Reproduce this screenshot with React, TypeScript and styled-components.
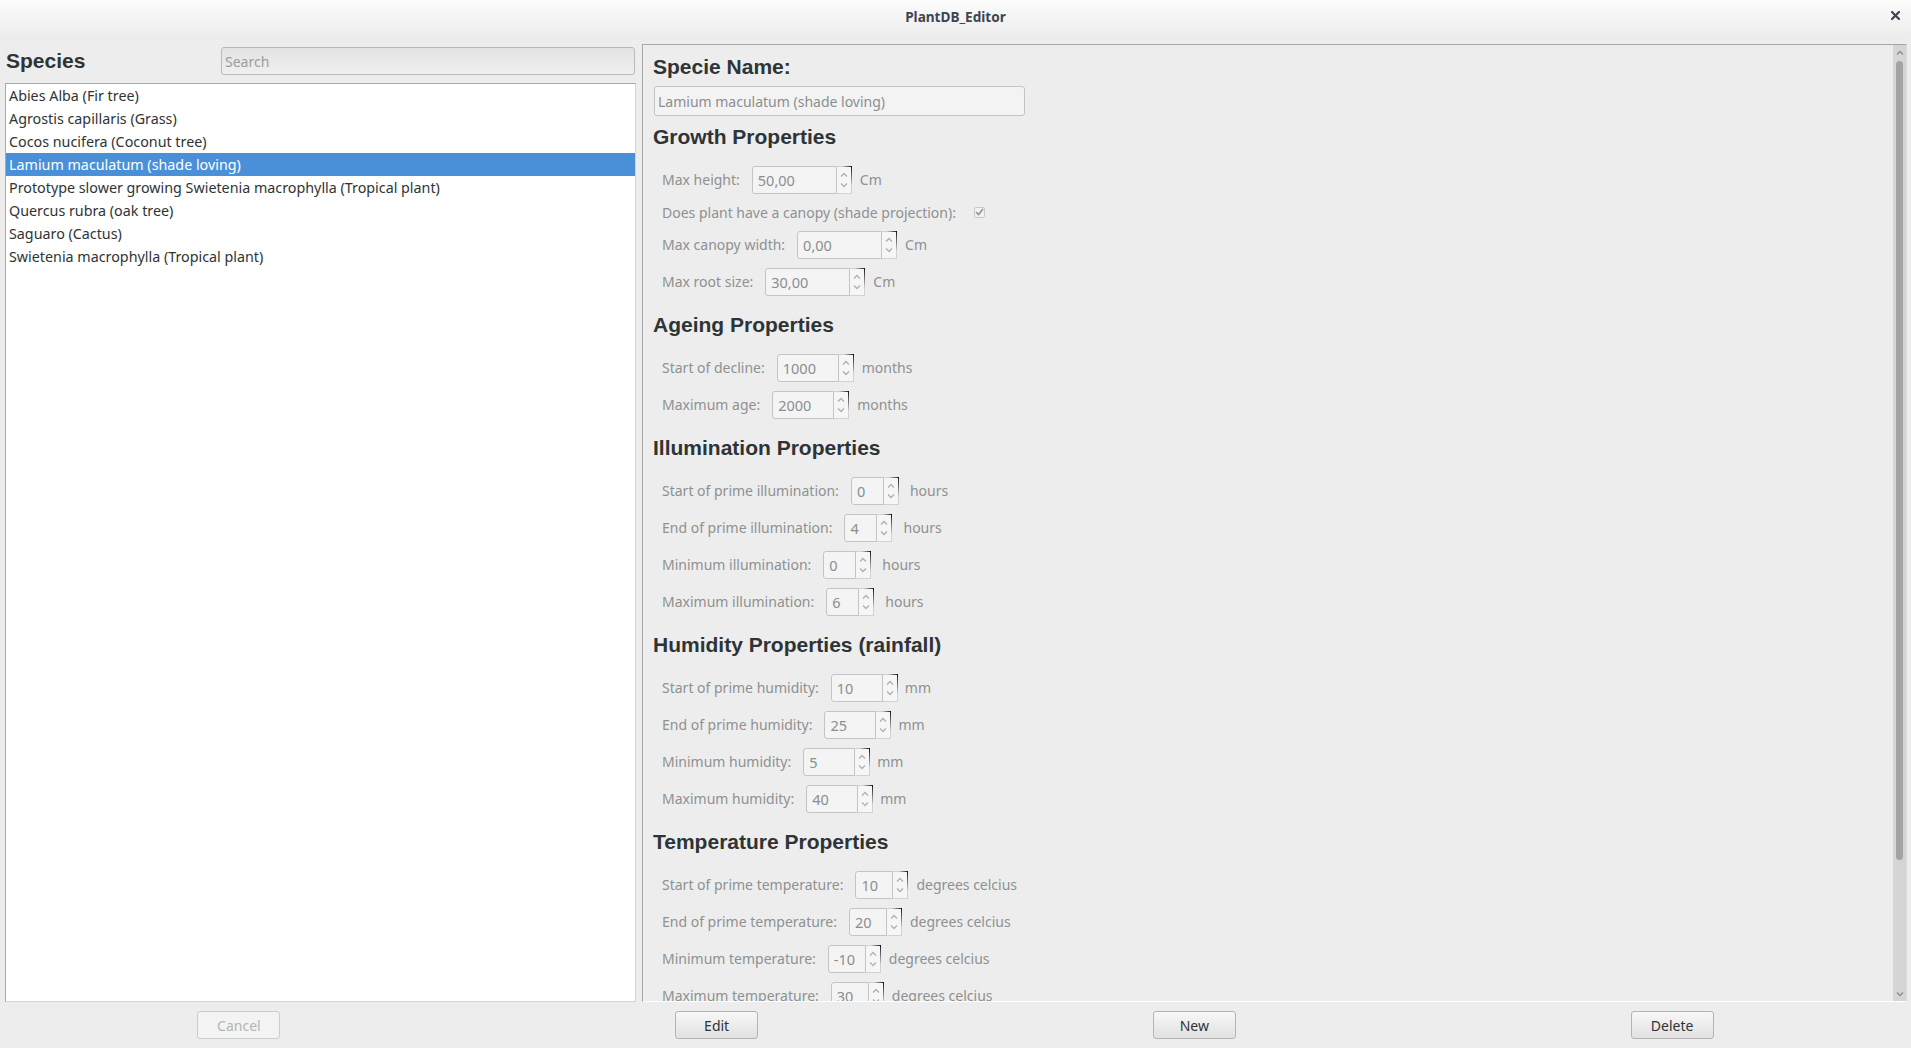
import React from 'react';
import styled, { createGlobalStyle } from 'styled-components';

const GlobalStyle = createGlobalStyle`
  html, body { margin: 0; padding: 0; background: #ededed; }
  body { font-family: "Noto Sans", "DejaVu Sans", sans-serif; }
  * { box-sizing: border-box; }
`;

const Window = styled.div`
  width: 1911px;
  height: 1048px;
  display: flex;
  flex-direction: column;
  background: #ededed;
  overflow: hidden;
`;

const TitleBar = styled.header`
  position: relative;
  flex: none;
  height: 36px;
  padding-bottom: 4px;
  display: flex;
  align-items: center;
  justify-content: center;
  background: linear-gradient(#fcfcfc, #ededed);
`;

const Title = styled.span`
  font: bold 13.6px "Noto Sans", sans-serif;
  color: #3c4650;
`;

const CloseButton = styled.button`
  position: absolute;
  right: 10px;
  top: 9px;
  width: 12px;
  height: 12px;
  padding: 0;
  border: none;
  background: transparent;
  display: flex;
  align-items: center;
  justify-content: center;
`;

const Main = styled.div`
  flex: 1;
  min-height: 0;
  display: flex;
`;

const LeftPane = styled.section`
  flex: none;
  width: 642px;
  display: flex;
  flex-direction: column;
  gap: 7px;
  padding: 10px 6px 1px 5px;
`;

const HeaderRow = styled.div`
  height: 30px;
  display: flex;
  align-items: center;
  justify-content: space-between;
`;

const SpeciesTitle = styled.h1`
  margin: 0 0 0 1px;
  font: bold 21px "Liberation Sans", Arial, sans-serif;
  color: #2e3436;
`;

const SearchInput = styled.input`
  width: 414px;
  height: 28px;
  margin-right: 1px;
  padding: 0 3px;
  border: 1px solid #b9b9b9;
  border-radius: 3px;
  background: linear-gradient(#e3e3e3, #efefef);
  font: 14px "Noto Sans", sans-serif;
  color: #2e3436;
  outline: none;
  &::placeholder { color: #9b9d9e; }
`;

const SpeciesList = styled.ul`
  flex: 1;
  margin: 0;
  padding: 0;
  list-style: none;
  background: #fff;
  border: 1px solid #a9a9a9;
  border-right-color: #d4d4d4;
  border-bottom-color: #d4d4d4;
`;

const SpeciesItem = styled.li<{ $selected?: boolean }>`
  height: 23px;
  padding-left: 3px;
  display: flex;
  align-items: center;
  font-size: 14.3px;
  color: ${(p) => (p.$selected ? '#ffffff' : '#2e3436')};
  background: ${(p) => (p.$selected ? '#4a90d9' : 'transparent')};
`;

const RightPane = styled.section`
  flex: 1;
  min-width: 0;
  display: flex;
  margin: 8px 4px 1px 0;
  border: 1px solid #a6a6a6;
  border-right-color: #dadada;
  border-bottom-color: #ffffff;
`;

const FormArea = styled.div`
  flex: 1;
  min-width: 0;
  overflow: hidden;
  padding: 4px 0 0 10px;
`;

const SectionTitle = styled.h2<{ $variant?: 'name' | 'tight' | 'normal' }>`
  margin: 0;
  display: flex;
  align-items: center;
  font: bold 21px "Liberation Sans", Arial, sans-serif;
  color: #2e3436;
  height: ${(p) => (p.$variant === 'name' ? '36px' : p.$variant === 'tight' ? '45px' : '49px')};
  padding-bottom: ${(p) => (p.$variant === 'tight' ? '4px' : '0')};
`;

const NameInput = styled.div`
  width: 371px;
  height: 30px;
  margin: 1px 0 0 1px;
  padding-left: 3px;
  display: flex;
  align-items: center;
  border: 1px solid #c3c3c3;
  border-radius: 3px;
  background: #f3f3f3;
  font-size: 14px;
  color: #8b8e8f;
`;

const FieldRow = styled.div<{ $short?: boolean }>`
  height: ${(p) => (p.$short ? '28px' : '37px')};
  padding-left: 9px;
  display: flex;
  align-items: center;
`;

const FieldLabel = styled.span`
  font-size: 14px;
  color: #8e9192;
  white-space: nowrap;
`;

const Spinner = styled.div`
  display: flex;
  height: 28px;
  margin-left: 12px;
`;

const SpinText = styled.div<{ $w: number }>`
  width: ${(p) => p.$w}px;
  height: 28px;
  padding-left: 5px;
  display: flex;
  align-items: center;
  border: 1px solid #c4c4c4;
  border-radius: 3px 0 0 3px;
  background: #f4f4f4;
  font-size: 14.5px;
  color: #8b8e8f;
`;

const SpinButtons = styled.div`
  position: relative;
  width: 15px;
  height: 28px;
  display: flex;
  flex-direction: column;
  align-items: center;
  justify-content: space-around;
  padding: 2px 0;
  border: 1px solid #d2d2d2;
  border-left: none;
  background: #f6f6f6;
  &::before {
    content: '';
    position: absolute;
    top: -1px;
    right: -1px;
    width: 70%;
    height: 1px;
    background: linear-gradient(to left, #111, rgba(0, 0, 0, 0));
  }
  &::after {
    content: '';
    position: absolute;
    top: -1px;
    right: -1px;
    width: 1px;
    height: 80%;
    background: linear-gradient(#111, rgba(0, 0, 0, 0));
  }
`;

const Unit = styled.span<{ $gap: number }>`
  margin-left: ${(p) => p.$gap}px;
  font-size: 14px;
  color: #8e9192;
  white-space: nowrap;
`;

const CheckBox = styled.div`
  width: 11px;
  height: 11px;
  margin-left: 18px;
  border: 1px solid #c9c9c9;
  border-radius: 2px;
  background: #f2f2f2;
  display: flex;
  align-items: center;
  justify-content: center;
`;

const ScrollTrack = styled.div`
  flex: none;
  width: 13px;
  display: flex;
  flex-direction: column;
  align-items: center;
  background: #d5d5d5;
`;

const ScrollArrow = styled.div`
  height: 14px;
  display: flex;
  align-items: center;
  justify-content: center;
`;

const ScrollThumb = styled.div`
  width: 7px;
  height: 799px;
  margin-top: 2px;
  border-radius: 4px;
  background: #a3a3a3;
`;

const ScrollSpacer = styled.div`
  flex: 1;
`;

const BottomBar = styled.footer`
  flex: none;
  height: 45px;
  padding-top: 8px;
  display: grid;
  grid-template-columns: repeat(4, 1fr);
  justify-items: center;
  align-items: start;
`;

const ActionButton = styled.button`
  width: 83px;
  height: 28px;
  border: 1px solid #b4b4b4;
  border-radius: 3px;
  background: linear-gradient(#f7f7f7, #e1e1e1);
  font: 14px "Noto Sans", sans-serif;
  color: #2e3436;
  padding: 0;
  &:disabled {
    color: #b4b6b3;
    background: #f3f3f3;
    border-color: #cdcdcd;
  }
`;

const Chevron = ({ up, color = '#b0b0b0' }: { up?: boolean; color?: string }) => (
  <svg width="8" height="5" viewBox="0 0 8 5">
    <polyline
      points={up ? '1,4.5 4,1.5 7,4.5' : '1,0.5 4,3.5 7,0.5'}
      fill="none"
      stroke={color}
      strokeWidth="1.3"
    />
  </svg>
);

type Row =
  | { kind: 'spin'; label: string; value: string; w: number; unit: string; unitGap?: number }
  | { kind: 'check'; label: string };

type Section = { title: string; tight?: boolean; rows: Row[] };

const species = [
  'Abies Alba (Fir tree)',
  'Agrostis capillaris (Grass)',
  'Cocos nucifera (Coconut tree)',
  'Lamium maculatum (shade loving)',
  'Prototype slower growing Swietenia macrophylla (Tropical plant)',
  'Quercus rubra (oak tree)',
  'Saguaro (Cactus)',
  'Swietenia macrophylla (Tropical plant)',
];

const sections: Section[] = [
  {
    title: 'Growth Properties',
    tight: true,
    rows: [
      { kind: 'spin', label: 'Max height:', value: '50,00', w: 85, unit: 'Cm' },
      { kind: 'check', label: 'Does plant have a canopy (shade projection):' },
      { kind: 'spin', label: 'Max canopy width:', value: '0,00', w: 85, unit: 'Cm' },
      { kind: 'spin', label: 'Max root size:', value: '30,00', w: 85, unit: 'Cm' },
    ],
  },
  {
    title: 'Ageing Properties',
    rows: [
      { kind: 'spin', label: 'Start of decline:', value: '1000', w: 62, unit: 'months' },
      { kind: 'spin', label: 'Maximum age:', value: '2000', w: 62, unit: 'months' },
    ],
  },
  {
    title: 'Illumination Properties',
    rows: [
      { kind: 'spin', label: 'Start of prime illumination:', value: '0', w: 33, unit: 'hours', unitGap: 11 },
      { kind: 'spin', label: 'End of prime illumination:', value: '4', w: 33, unit: 'hours', unitGap: 11 },
      { kind: 'spin', label: 'Minimum illumination:', value: '0', w: 33, unit: 'hours', unitGap: 11 },
      { kind: 'spin', label: 'Maximum illumination:', value: '6', w: 33, unit: 'hours', unitGap: 11 },
    ],
  },
  {
    title: 'Humidity Properties (rainfall)',
    rows: [
      { kind: 'spin', label: 'Start of prime humidity:', value: '10', w: 52, unit: 'mm', unitGap: 7 },
      { kind: 'spin', label: 'End of prime humidity:', value: '25', w: 52, unit: 'mm', unitGap: 7 },
      { kind: 'spin', label: 'Minimum humidity:', value: '5', w: 52, unit: 'mm', unitGap: 7 },
      { kind: 'spin', label: 'Maximum humidity:', value: '40', w: 52, unit: 'mm', unitGap: 7 },
    ],
  },
  {
    title: 'Temperature Properties',
    rows: [
      { kind: 'spin', label: 'Start of prime temperature:', value: '10', w: 38, unit: 'degrees celcius' },
      { kind: 'spin', label: 'End of prime temperature:', value: '20', w: 38, unit: 'degrees celcius' },
      { kind: 'spin', label: 'Minimum temperature:', value: '-10', w: 38, unit: 'degrees celcius' },
      { kind: 'spin', label: 'Maximum temperature:', value: '30', w: 38, unit: 'degrees celcius' },
    ],
  },
];

const FieldLine = ({ row }: { row: Row }) => {
  if (row.kind === 'check') {
    return (
      <FieldRow $short>
        <FieldLabel>{row.label}</FieldLabel>
        <CheckBox>
          <svg width="9" height="8" viewBox="0 0 9 8">
            <polyline points="1,4 3.5,6.5 8,1" fill="none" stroke="#8f9192" strokeWidth="1.6" />
          </svg>
        </CheckBox>
      </FieldRow>
    );
  }
  return (
    <FieldRow>
      <FieldLabel>{row.label}</FieldLabel>
      <Spinner>
        <SpinText $w={row.w}>{row.value}</SpinText>
        <SpinButtons>
          <Chevron up />
          <Chevron />
        </SpinButtons>
      </Spinner>
      <Unit $gap={row.unitGap ?? 8}>{row.unit}</Unit>
    </FieldRow>
  );
};

export default function App() {
  return (
    <Window>
      <GlobalStyle />
      <TitleBar>
        <Title>PlantDB_Editor</Title>
        <CloseButton aria-label="Close">
          <svg width="9" height="9" viewBox="0 0 9 9">
            <path d="M1 1 L8 8 M8 1 L1 8" stroke="#3c4650" strokeWidth="2.2" strokeLinecap="square" />
          </svg>
        </CloseButton>
      </TitleBar>
      <Main>
        <LeftPane>
          <HeaderRow>
            <SpeciesTitle>Species</SpeciesTitle>
            <SearchInput placeholder="Search" />
          </HeaderRow>
          <SpeciesList>
            {species.map((s) => (
              <SpeciesItem key={s} $selected={s.startsWith('Lamium')}>
                {s}
              </SpeciesItem>
            ))}
          </SpeciesList>
        </LeftPane>
        <RightPane>
          <FormArea>
            <SectionTitle $variant="name">Specie Name:</SectionTitle>
            <NameInput>Lamium maculatum (shade loving)</NameInput>
            {sections.map((sec) => (
              <div key={sec.title}>
                <SectionTitle $variant={sec.tight ? 'tight' : 'normal'}>{sec.title}</SectionTitle>
                {sec.rows.map((r) => (
                  <FieldLine key={r.label} row={r} />
                ))}
              </div>
            ))}
          </FormArea>
          <ScrollTrack>
            <ScrollArrow>
              <Chevron up color="#8c8c8c" />
            </ScrollArrow>
            <ScrollThumb />
            <ScrollSpacer />
            <ScrollArrow>
              <Chevron color="#8c8c8c" />
            </ScrollArrow>
          </ScrollTrack>
        </RightPane>
      </Main>
      <BottomBar>
        <ActionButton disabled>Cancel</ActionButton>
        <ActionButton>Edit</ActionButton>
        <ActionButton>New</ActionButton>
        <ActionButton>Delete</ActionButton>
      </BottomBar>
    </Window>
  );
}
